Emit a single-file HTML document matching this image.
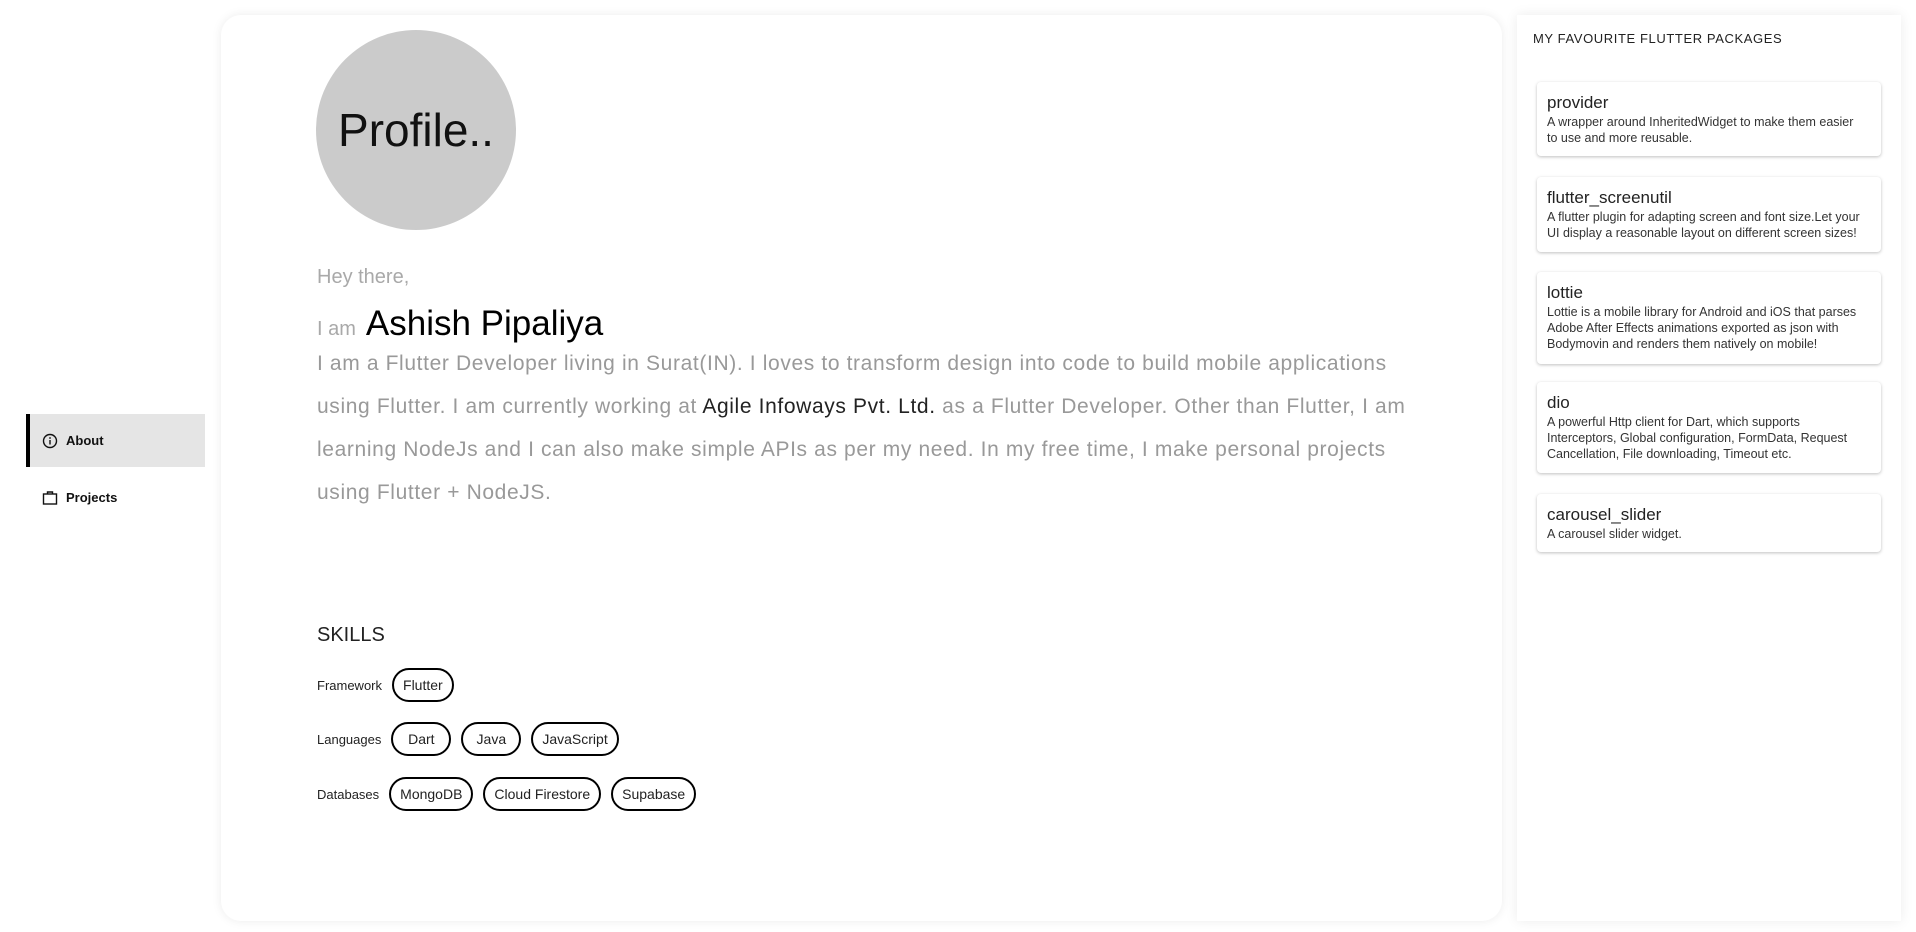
<!DOCTYPE html>
<html><head><meta charset="utf-8"><style>
*{margin:0;padding:0;box-sizing:border-box}
body{width:1916px;height:932px;background:#fff;font-family:"Liberation Sans",sans-serif;position:relative;overflow:hidden}
.nav{position:absolute;left:26px;width:179px;height:53px;display:flex;align-items:center;padding-left:16px;font-size:13px;font-weight:bold;color:#111}
.nav svg{margin-right:8px}
.main{position:absolute;left:221px;top:15px;width:1281px;height:906px;background:#fff;border-radius:20px;box-shadow:0 0 10px rgba(0,0,0,.08)}
.avatar{position:absolute;left:316px;top:30px;width:200px;height:200px;border-radius:50%;background:#cbcbcb;display:flex;align-items:center;justify-content:center;font-size:46px;color:#111}
.gray{color:#a9a9a9}
.p{position:absolute;left:317px;top:342px;width:1200px;font-size:21px;letter-spacing:.63px;line-height:43px;color:#999;white-space:nowrap}
.p b{font-weight:normal;color:#222}
.skills{position:absolute;left:317px;top:624px;font-size:20px;color:#222}
.row{position:absolute;left:317px;display:flex;align-items:center;font-size:13px;color:#222}
.chip{border:2px solid #000;border-radius:18px;height:34px;padding:0 9px;display:flex;align-items:center;font-size:14px;margin-right:10px;min-width:60px;justify-content:center}
.panel{position:absolute;left:1517px;top:15px;width:384px;height:906px;background:#fff;box-shadow:0 0 12px rgba(0,0,0,.08)}
.ptitle{position:absolute;left:16px;top:16px;font-size:13px;letter-spacing:.6px;color:#222}
.card{position:absolute;left:20px;width:344px;background:#fff;border-radius:4px;box-shadow:0 1px 3px rgba(0,0,0,.25);padding:11px 10px}
.card h4{font-weight:normal;font-size:17px;color:#222;line-height:20px;margin-bottom:1px}
.card p{font-size:12.5px;line-height:16px;color:#333;white-space:nowrap}
</style></head><body>
<div class="nav" style="top:414px;background:#e5e5e5;border-left:4px solid #000;padding-left:12px">
<svg width="16" height="16" viewBox="0 0 16 16"><circle cx="8" cy="8" r="6.5" fill="none" stroke="#111" stroke-width="1.4"/><rect x="7.3" y="7" width="1.4" height="4.5" fill="#111"/><circle cx="8" cy="5" r=".9" fill="#111"/></svg>About</div>
<div class="nav" style="top:471px">
<svg width="16" height="16" viewBox="0 0 16 16"><rect x="1.5" y="4" width="13" height="10" fill="none" stroke="#111" stroke-width="1.4"/><path d="M5.5 4V2h5v2" fill="none" stroke="#111" stroke-width="1.4"/></svg>Projects</div>
<div class="main"></div>
<div class="avatar">Profile..</div>
<div class="gray" style="position:absolute;left:317px;top:266px;font-size:20px">Hey there,</div>
<div style="position:absolute;left:317px;top:304px;display:flex;align-items:baseline"><span class="gray" style="font-size:20px;margin-right:10px">I am</span><span style="font-size:35px;color:#000">Ashish Pipaliya</span></div>
<div class="p">I am a Flutter Developer living in Surat(IN). I loves to transform design into code to build mobile applications<br>using Flutter. I am currently working at <b>Agile Infoways Pvt. Ltd.</b> as a Flutter Developer. Other than Flutter, I am<br>learning NodeJs and I can also make simple APIs as per my need. In my free time, I make personal projects<br>using Flutter + NodeJS.</div>
<div class="skills">SKILLS</div>
<div class="row" style="top:668px"><span style="margin-right:10px">Framework</span><div class="chip">Flutter</div></div>
<div class="row" style="top:722px"><span style="margin-right:10px">Languages</span><div class="chip">Dart</div><div class="chip">Java</div><div class="chip">JavaScript</div></div>
<div class="row" style="top:777px"><span style="margin-right:10px">Databases</span><div class="chip">MongoDB</div><div class="chip">Cloud Firestore</div><div class="chip">Supabase</div></div>
<div class="panel">
<div class="ptitle">MY FAVOURITE FLUTTER PACKAGES</div>
<div class="card" style="top:67px;height:74px"><h4>provider</h4><p>A wrapper around InheritedWidget to make them easier<br>to use and more reusable.</p></div>
<div class="card" style="top:162px;height:75px"><h4>flutter_screenutil</h4><p>A flutter plugin for adapting screen and font size.Let your<br>UI display a reasonable layout on different screen sizes!</p></div>
<div class="card" style="top:257px;height:92px"><h4>lottie</h4><p>Lottie is a mobile library for Android and iOS that parses<br>Adobe After Effects animations exported as json with<br>Bodymovin and renders them natively on mobile!</p></div>
<div class="card" style="top:367px;height:91px"><h4>dio</h4><p>A powerful Http client for Dart, which supports<br>Interceptors, Global configuration, FormData, Request<br>Cancellation, File downloading, Timeout etc.</p></div>
<div class="card" style="top:479px;height:58px"><h4>carousel_slider</h4><p>A carousel slider widget.</p></div>
</div>
</body></html>
